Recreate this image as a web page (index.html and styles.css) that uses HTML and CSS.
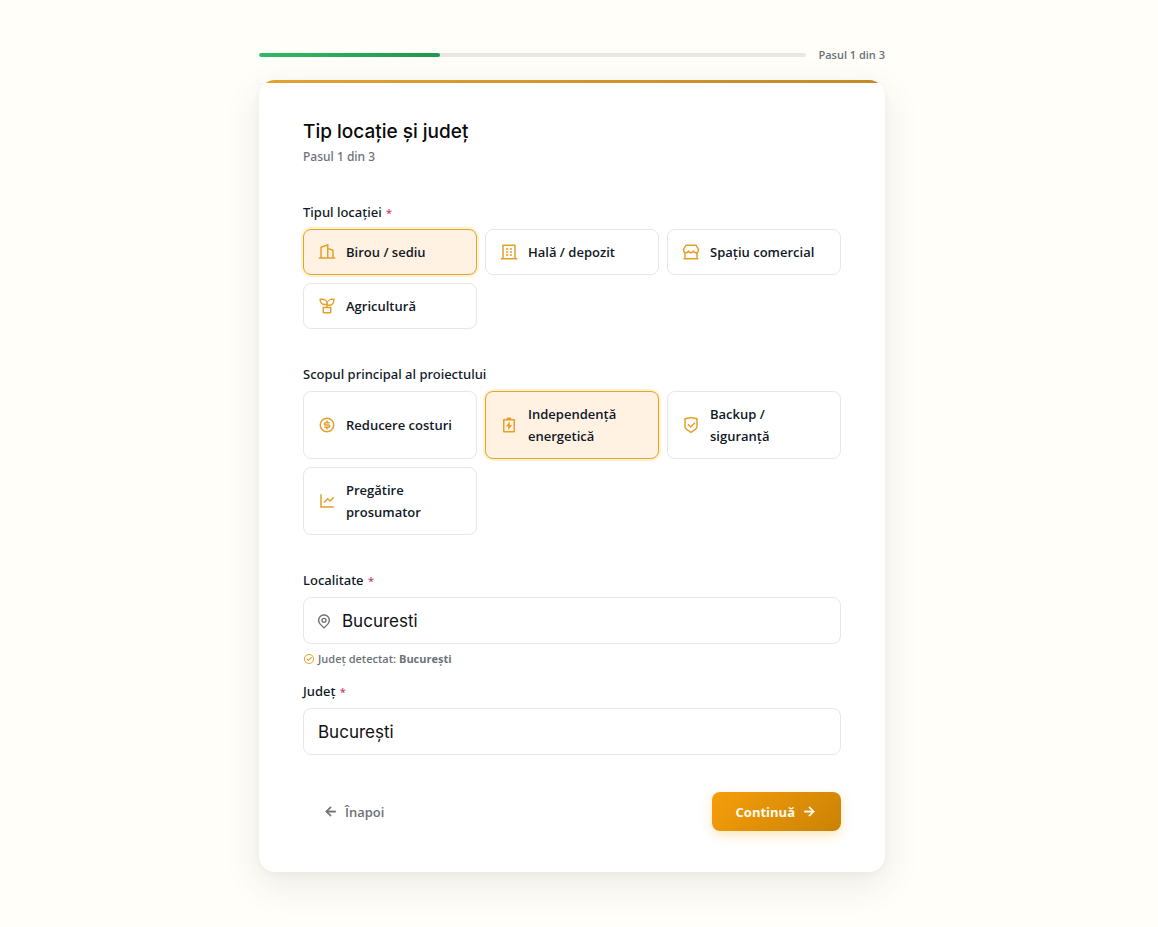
FILE: index.html
```html
<!DOCTYPE html>
<html lang="ro">
<head>
  <meta charset="UTF-8" />
  <meta name="viewport" content="width=device-width, initial-scale=1" />
  <title>Tip locație și județ</title>
  <link rel="stylesheet" href="styles.css">
</head>
<body>
  <main class="wizard">
    <div class="progress">
      <div class="progress-track">
        <div class="progress-fill"></div>
      </div>
      <span class="progress-label">Pasul 1 din 3</span>
    </div>

    <form class="card">
      <div class="card-line"></div>
      <h1 class="title">Tip locație și județ</h1>
      <p class="subtitle">Pasul 1 din 3</p>

      <!-- Tipul locatiei -->
      <fieldset class="group">
        <legend class="label">Tipul locației <span class="required">*</span></legend>
        <div class="options">
          <label class="option">
            <input type="radio" name="locatie" value="birou" checked />
            <svg class="icon" viewBox="0 0 24 24"><path d="M3 19V5.70046C3 5.27995 3.26307 4.90437 3.65826 4.76067L13.3291 1.24398C13.5886 1.14961 13.8755 1.28349 13.9699 1.54301C13.9898 1.59778 14 1.65561 14 1.71388V6.6667L20.3162 8.77211C20.7246 8.90822 21 9.29036 21 9.72076V19H23V21H1V19H3ZM5 19H12V3.85543L5 6.40089V19ZM19 19V10.4416L14 8.77488V19H19Z"/></svg>
            <span>Birou / sediu</span>
          </label>
          <label class="option">
            <input type="radio" name="locatie" value="hala" />
            <svg class="icon" viewBox="0 0 24 24"><path d="M21 20H23V22H1V20H3V3C3 2.44772 3.44772 2 4 2H20C20.5523 2 21 2.44772 21 3V20ZM19 20V4H5V20H19ZM8 11H11V13H8V11ZM8 7H11V9H8V7ZM8 15H11V17H8V15ZM13 15H16V17H13V15ZM13 11H16V13H13V11ZM13 7H16V9H13V7Z"/></svg>
            <span>Hală / depozit</span>
          </label>
          <label class="option">
            <input type="radio" name="locatie" value="comercial" />
            <svg class="icon" viewBox="0 0 24 24"><path d="M21 13.2422V20H22V22H2V20H3V13.2422C1.79401 12.435 1 11.0602 1 9.5C1 8.67286 1.22443 7.87621 1.63322 7.19746L4.3453 2.5C4.52393 2.1906 4.85406 2 5.21132 2H18.7887C19.1459 2 19.4761 2.1906 19.6547 2.5L22.3575 7.18172C22.7756 7.87621 23 8.67286 23 9.5C23 11.0602 22.206 12.435 21 13.2422ZM19 13.9725C18.8358 13.9907 18.669 14 18.5 14C17.2409 14 16.0789 13.478 15.25 12.6132C14.4211 13.478 13.2591 14 12 14C10.7409 14 9.5789 13.478 8.75 12.6132C7.9211 13.478 6.75911 14 5.5 14C5.331 14 5.16417 13.9907 5 13.9725V20H19V13.9725ZM5.78865 4L3.35598 8.21321C3.12409 8.59843 3 9.0389 3 9.5C3 10.8807 4.11929 12 5.5 12C6.53096 12 7.44467 11.3703 7.82179 10.4295C8.1574 9.59223 9.3426 9.59223 9.67821 10.4295C10.0553 11.3703 10.969 12 12 12C13.031 12 13.9447 11.3703 14.3218 10.4295C14.6574 9.59223 15.8426 9.59223 16.1782 10.4295C16.5553 11.3703 17.469 12 18.5 12C19.8807 12 21 10.8807 21 9.5C21 9.0389 20.8759 8.59843 20.6347 8.19567L18.2113 4H5.78865Z"/></svg>
            <span>Spațiu comercial</span>
          </label>
          <label class="option">
            <input type="radio" name="locatie" value="agricultura" />
            <svg class="icon" viewBox="0 0 24 24"><path fill-rule="evenodd" d="M22 2v3a7 7 0 0 1-7 7h-2v1h5v7a2 2 0 0 1-2 2H8a2 2 0 0 1-2-2v-7h5v-2H9a7 7 0 0 1-7-7V2h4a7 7 0 0 1 6.3 4A7 7 0 0 1 18 2h4zM16 15H8v5h8v-5zM20 4h-2a5 5 0 0 0-5 5v1h2a5 5 0 0 0 5-5V4zM6 4H4a5 5 0 0 0 5 5h2a5 5 0 0 0-5-5z"/></svg>
            <span>Agricultură</span>
          </label>
        </div>
      </fieldset>

      <!-- Scopul proiectului -->
      <fieldset class="group">
        <legend class="label">Scopul principal al proiectului</legend>
        <div class="options">
          <label class="option">
            <input type="radio" name="scop" value="costuri" />
            <svg class="icon" viewBox="0 0 24 24"><path fill-rule="evenodd" d="M12 22a10 10 0 1 1 0-20 10 10 0 0 1 0 20zM12 20a8 8 0 1 0 0-16 8 8 0 0 0 0 16zM8.5 14H14C14.2761 14 14.5 13.7761 14.5 13.5C14.5 13.2239 14.2761 13 14 13H10C8.61929 13 7.5 11.8807 7.5 10.5C7.5 9.11929 8.61929 8 10 8H11V6H13V8H15.5V10H10C9.72386 10 9.5 10.2239 9.5 10.5C9.5 10.7761 9.72386 11 10 11H14C15.3807 11 16.5 12.1193 16.5 13.5C16.5 14.8807 15.3807 16 14 16H13V18H11V16H8.5V14Z"/></svg>
            <span>Reducere costuri</span>
          </label>
          <label class="option">
            <input type="radio" name="scop" value="independenta" checked />
            <svg class="icon" viewBox="0 0 24 24"><path fill-rule="evenodd" d="M9 4V3C9 2.448 9.448 2 10 2H14C14.55 2 15 2.448 15 3V4H19C19.55 4 20 4.448 20 5V21C20 21.55 19.55 22 19 22H5C4.448 22 4 21.55 4 21V5C4 4.448 4.448 4 5 4H9ZM6 20H18V6H6V20ZM13 12H16L11 19V14H8L13 7V12Z"/></svg>
            <span>Independență energetică</span>
          </label>
          <label class="option">
            <input type="radio" name="scop" value="backup" />
            <svg class="icon" viewBox="0 0 24 24"><path fill-rule="evenodd" d="M12 1L20.2169 2.82598C20.6745 2.92766 21 3.33347 21 3.80217V13.7889C21 15.795 19.9974 17.6684 18.3282 18.7812L12 23L5.6718 18.7812C4.00261 17.6684 3 15.795 3 13.7889V3.80217C3 3.33347 3.32553 2.92766 3.78307 2.82598L12 1ZM12 3.04879L5 4.60434V13.7889C5 15.1263 5.6684 16.3752 6.7812 17.1171L12 20.5963L17.2188 17.1171C18.3316 16.3752 19 15.1263 19 13.7889V4.60434L12 3.04879ZM16.4524 8.22183L17.8666 9.63604L11.5026 16L7.25999 11.7574L8.67421 10.3431L11.5019 13.1709L16.4524 8.22183Z"/></svg>
            <span>Backup / siguranță</span>
          </label>
          <label class="option">
            <input type="radio" name="scop" value="prosumator" />
            <svg class="icon" viewBox="0 0 24 24"><path d="M5 3V19H21V21H3V3H5ZM20.2929 6.29289L21.7071 7.70711L16 13.4142L13 10.415L8.70711 14.7071L7.29289 13.2929L13 7.58579L16 10.585L20.2929 6.29289Z"/></svg>
            <span>Pregătire prosumator</span>
          </label>
        </div>
      </fieldset>

      <!-- Localitate si judet -->
      <div class="field">
        <label class="label" for="localitate">Localitate <span class="required">*</span></label>
        <div class="control">
          <svg class="pin" viewBox="0 0 24 24"><path fill-rule="evenodd" d="M12 23.7279L5.63604 17.364C2.12132 13.8492 2.12132 8.15076 5.63604 4.63604C9.15076 1.12132 14.8492 1.12132 18.364 4.63604C21.8787 8.15076 21.8787 13.8492 18.364 17.364L12 23.7279ZM16.9497 15.9497C19.6834 13.2161 19.6834 8.78392 16.9497 6.05025C14.2161 3.31658 9.78392 3.31658 7.05025 6.05025C4.31658 8.78392 4.31658 13.2161 7.05025 15.9497L12 20.8995L16.9497 15.9497ZM12 15a4 4 0 1 1 0-8 4 4 0 0 1 0 8zM12 13a2 2 0 1 0 0-4 2 2 0 0 0 0 4z"/></svg>
          <input class="input" id="localitate" type="text" value="Bucuresti" />
        </div>
        <p class="hint">
          <svg class="hint-icon" viewBox="0 0 24 24"><path fill-rule="evenodd" d="M12 22a10 10 0 1 1 0-20 10 10 0 0 1 0 20zM12 20a8 8 0 1 0 0-16 8 8 0 0 0 0 16zM11.003 16L6.76 11.757l1.414-1.414 2.829 2.829 5.656-5.657 1.415 1.414L11.003 16z"/></svg>
          <span>Județ detectat: <strong>București</strong></span>
        </p>
      </div>
      <div class="field">
        <label class="label" for="judet">Județ <span class="required">*</span></label>
        <div class="control">
          <select class="input" id="judet">
            <option>București</option>
          </select>
        </div>
      </div>

      <div class="actions">
        <button class="btn btn-back" type="button">
          <svg class="arrow" viewBox="0 0 24 24"><path d="M7.828 11H20v2H7.828l5.364 5.364-1.414 1.414L4 12l7.778-7.778 1.414 1.414z"/></svg>
          Înapoi
        </button>
        <button class="btn btn-next" type="button">
          Continuă
          <svg class="arrow" viewBox="0 0 24 24"><path d="M16.172 11l-5.364-5.364 1.414-1.414L20 12l-7.778 7.778-1.414-1.414L16.172 13H4v-2z"/></svg>
        </button>
      </div>
    </form>
  </main>
</body>
</html>
```
FILE: styles.css
```css
* { box-sizing: border-box; }
body {
  margin: 0;
  padding: 47px 30px 48px 16px;
  min-height: 100vh;
  font-family: 'Open Sans', 'Noto Sans', sans-serif;
  background: #fffef9;
  color: #111827;
}
.wizard {
  max-width: 626px;
  margin: 0 auto;
}

/* Progress */
.progress {
  display: flex;
  align-items: center;
  gap: 12px;
  margin-bottom: 17px;
}
.progress-track {
  flex: 1;
  height: 4px;
  border-radius: 4px;
  background: #e7e7e3;
  overflow: hidden;
}
.progress-fill {
  width: 33%;
  height: 100%;
  border-radius: 4px;
  background: linear-gradient(90deg, #32b866, #1f9850);
}
.progress-label {
  font-size: 11px;
  line-height: 16px;
  font-weight: 600;
  color: #6c7278;
}

/* Card */
.card {
  padding: 0 44px 41px;
  border-radius: 16px;
  background: #fff;
  box-shadow: 0 12px 36px rgba(60, 60, 40, 0.1), 0 2px 8px rgba(60, 60, 40, 0.04);
  overflow: hidden;
}
.card-line {
  height: 3px;
  margin: 0 -44px 35px;
  background: linear-gradient(90deg, #e3a12f, #c48a25);
}
.title {
  margin: 0;
  font-family: Inter, sans-serif;
  font-size: 19px;
  line-height: 28px;
  font-weight: 500;
  color: #0a0a0a;
}
.subtitle {
  margin: 0 0 35px;
  font-family: 'Noto Sans', sans-serif;
  font-size: 12px;
  line-height: 21px;
  font-weight: 500;
  color: #6c7278;
}

.group {
  margin: 0 0 35px;
  padding: 0;
  border: none;
}
.label {
  display: block;
  margin-bottom: 7px;
  padding: 0;
  font-family: 'Noto Sans', sans-serif;
  font-size: 13px;
  line-height: 20px;
  font-weight: 500;
}
.required {
  margin-left: 1px;
  font-size: 11px;
  line-height: 1;
  color: #c9445a;
}
.options {
  display: grid;
  grid-template-columns: repeat(3, 1fr);
  gap: 8px;
}
.option {
  display: flex;
  align-items: center;
  gap: 10px;
  padding: 11px 14px;
  border: 1px solid #e5e7eb;
  border-radius: 8px;
  font-size: 13px;
  line-height: 22px;
  font-weight: 600;
  cursor: pointer;
}
.option input {
  position: absolute;
  opacity: 0;
  pointer-events: none;
}
.option:has(input:checked) {
  border-color: #dfa536;
  background: #fff2e2;
  box-shadow: 0 0 0 2px #fdf2cd;
}
.icon {
  flex: none;
  width: 18px;
  height: 18px;
  fill: #e4a02b;
}

/* Fields */
.control {
  display: flex;
  align-items: center;
  height: 47px;
  padding: 0 14px;
  border: 1px solid #e5e7eb;
  border-radius: 8px;
}
.control:focus-within { border-color: #dfa536; }
.pin {
  flex: none;
  width: 16px;
  height: 16px;
  margin: 0 10px 0 -2px;
  fill: #6c7278;
}
.input {
  flex: 1;
  min-width: 0;
  padding: 0;
  border: none;
  outline: none;
  background: none;
  appearance: none;
  font-family: Inter, sans-serif;
  font-size: 17px;
  line-height: 28px;
  color: #111;
}
.hint {
  display: flex;
  align-items: center;
  gap: 3px;
  margin: 5px 0 12px;
  font-size: 11px;
  line-height: 20px;
  font-weight: 600;
  color: #6c7278;
}
.hint strong { font-weight: 700; }
.hint-icon {
  width: 12px;
  height: 12px;
  fill: #e4a02b;
}

/* Buttons */
.actions {
  display: flex;
  justify-content: space-between;
  margin-top: 37px;
}
.btn {
  display: flex;
  align-items: center;
  gap: 7px;
  height: 39px;
  padding: 0 24px;
  border: none;
  border-radius: 8px;
  font-family: inherit;
  font-size: 13px;
  cursor: pointer;
}
.btn-back {
  padding: 0 20px;
  background: none;
  font-weight: 600;
  color: #6c7278;
}
.btn-next {
  background: linear-gradient(135deg, #f59e0b, #ca8205);
  box-shadow: 0 4px 12px rgba(245, 170, 30, 0.3);
  font-weight: 700;
  color: #fffbeb;
}
.arrow {
  width: 15px;
  height: 15px;
  fill: currentColor;
  stroke: currentColor;
}
```
